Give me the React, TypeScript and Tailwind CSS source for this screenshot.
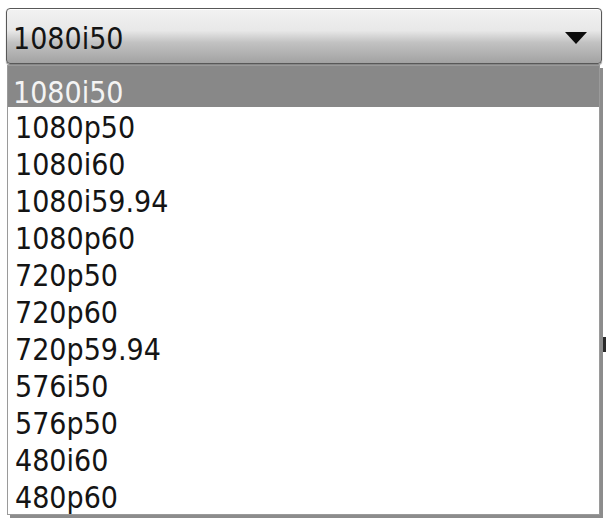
import React from "react";

const items = [
  "1080p50",
  "1080i60",
  "1080i59.94",
  "1080p60",
  "720p50",
  "720p60",
  "720p59.94",
  "576i50",
  "576p50",
  "480i60",
  "480p60",
];

export default function App() {
  return (
    <div
      className="relative w-[606px] h-[523px] overflow-hidden bg-white text-[#141414]"
      style={{ fontFamily: '"DejaVu Sans Condensed", "DejaVu Sans", sans-serif' }}
    >
      <div className="absolute left-[601px] top-[337px] h-[15px] w-[5px] bg-[#2a2a2a]" />
      <div className="relative pt-[8px] pl-[6px] pr-[4px]">
        <div className="flex h-[56px] items-center justify-between rounded-[4px] border border-[#585858] bg-[linear-gradient(to_bottom,#f2f2f2_0%,#e8e8e8_40%,#c2c2c2_62%,#a2a2a2_100%)] pl-[6px] pr-[14px] shadow-[inset_0_1px_0_#ffffff,0_1px_1px_#7a7a7a]">
          <span className="pt-[6px] text-[30px] leading-none">1080i50</span>
          <svg width="22" height="12" viewBox="0 0 22 12" className="mt-[4px]">
            <polygon points="0,0 22,0 11,12" fill="#0c0c0c" />
          </svg>
        </div>
        <div className="ml-[1px] mr-[2px] mt-[1px] border border-[#9a9a9a] bg-white shadow-[3px_3px_0_#8c8c8c]">
          <div className="flex h-[41px] items-center bg-[#888888] pl-[5px] pt-[12px] text-[30px] leading-none text-[#f4f4f4]">
            1080i50
          </div>
          {items.map((t) => (
            <div key={t} className="flex h-[37px] items-center pl-[7px] pt-[5px] text-[30px] leading-none">
              {t}
            </div>
          ))}
        </div>
      </div>
    </div>
  );
}
